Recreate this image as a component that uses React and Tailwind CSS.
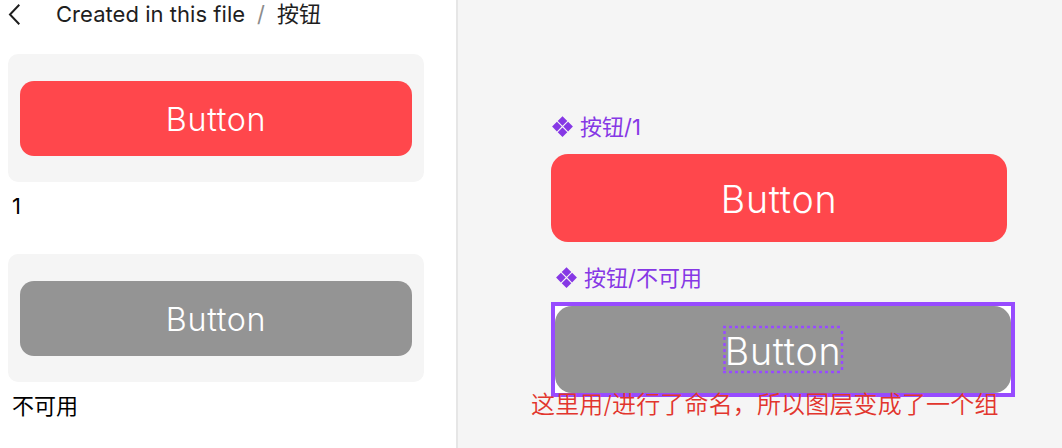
import React from 'react'

const ComponentIcon = () => (
  <svg className="w-[22px] h-[22px] shrink-0" viewBox="0 0 22 22" fill="currentColor">
    <path d="M11.5 .2 16.3 5 11.5 9.8 6.7 5zM11.5 11.4 16.3 16.2 11.5 21 6.7 16.2zM5.9 5.8 10.7 10.6 5.9 15.4 1.1 10.6zM17.1 5.8 21.9 10.6 17.1 15.4 12.3 10.6z" />
  </svg>
)

const AssetCard = ({ name, color }) => (
  <div className="h-[200px]">
    <div className="h-32 px-3 flex items-center rounded-[10px] bg-[#f5f5f5]">
      <div className={`w-full h-[75px] flex items-center justify-center rounded-[14px] ${color}`}>
        <span className="pt-[5px] text-[32.3px] leading-none font-light tracking-[0.65px] text-white">Button</span>
      </div>
    </div>
    <div className="pl-1 pt-2 text-[22px] leading-8 text-black">{name}</div>
  </div>
)

const LayerLabel = ({ children }) => (
  <div className="flex items-center gap-[7px] h-8 text-[22px] text-[#8638e5]">
    <ComponentIcon />
    <span>{children}</span>
  </div>
)

const App = () => {
  return (
    <div className="flex w-[1062px] h-[448px] overflow-hidden bg-white font-['Inter','Noto_Sans_CJK_SC',sans-serif] whitespace-nowrap">
      <aside className="w-[458px] shrink-0 border-r-2 border-[#e6e6e6] pl-2 pr-8">
        <header className="flex items-center h-[54px] pb-[25px] text-[22px] text-[#1e1e1e]">
          <svg className="w-3 h-[22px] shrink-0" viewBox="0 0 12 22" fill="none" stroke="currentColor" strokeWidth="2">
            <path d="M11.3 .8 2 10.5l9.3 9.7" />
          </svg>
          <span className="w-[189px] ml-9 tracking-[0.04px]">Created in this file</span>
          <span className="ml-3 text-[#8c8c8c]">/</span>
          <span className="ml-3">按钮</span>
        </header>
        <AssetCard name="1" color="bg-[#ff474c]" />
        <AssetCard name="不可用" color="bg-[#949494]" />
      </aside>

      <main className="relative grow bg-[#f5f5f5] pl-[93px] pt-[111px]">
        <LayerLabel>按钮/1</LayerLabel>
        <div className="mt-[11px] w-[456px] h-[88px] flex items-center justify-center rounded-[17px] bg-[#ff474c]">
          <span className="pt-1 text-[37.5px] leading-none font-light tracking-[0.75px] text-white">Button</span>
        </div>

        <div className="mt-5 pl-1">
          <LayerLabel>按钮/不可用</LayerLabel>
        </div>
        <div className="mt-2 w-[464px] h-[95px] border-4 border-[#974bff] bg-white">
          <div className="relative w-full h-full flex items-center justify-center rounded-[17px] bg-[#949494]">
            <span className="pt-[5px] text-[37.5px] leading-none font-light tracking-[0.75px] text-white">Button</span>
            {/* marquee around the nested text layer */}
            <svg className="absolute left-[168px] top-[19px] w-[122px] h-[49px]" fill="none" stroke="#974bff" strokeWidth="2.5" strokeDasharray="3 3">
              <path d="M0 2h120M0 47h120M1.5 6v40M119 6v40" />
            </svg>
          </div>
        </div>

        <p className="absolute left-[73px] top-[387px] text-[24px] leading-9 font-[350] tracking-[0.16px] text-[#e2352d]">
          这里用/进行了命名，所以图层变成了一个组
        </p>
      </main>
    </div>
  )
}

export default App
